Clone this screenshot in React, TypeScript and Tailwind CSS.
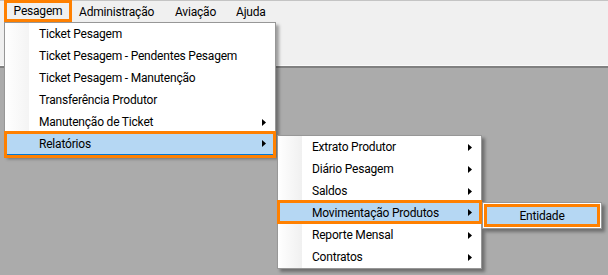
import React from 'react';

interface MenuItem {
  label: string;
  sub?: boolean;
  active?: boolean;
}

const pesagemItems: MenuItem[] = [
  { label: 'Ticket Pesagem' },
  { label: 'Ticket Pesagem - Pendentes Pesagem' },
  { label: 'Ticket Pesagem - Manutenção' },
  { label: 'Transferência Produtor' },
  { label: 'Manutenção de Ticket', sub: true },
  { label: 'Relatórios', sub: true, active: true },
];

const relatoriosItems: MenuItem[] = [
  { label: 'Extrato Produtor', sub: true },
  { label: 'Diário Pesagem', sub: true },
  { label: 'Saldos', sub: true },
  { label: 'Movimentação Produtos', sub: true, active: true },
  { label: 'Reporte Mensal', sub: true },
  { label: 'Contratos', sub: true },
];

function Arrow() {
  return (
    <svg width="4" height="7" viewBox="0 0 4 7" className="shrink-0">
      <polygon points="0,0 4,3.5 0,7" fill="#000" />
    </svg>
  );
}

function MenuRow({ item, last }: { item: MenuItem; last?: boolean }) {
  return (
    <div
      className={`relative flex h-[22px] items-center justify-between pl-[34px] pr-[9px] ${
        item.active ? 'bg-[#b5d7f3] border-b border-[#0078d7]' : ''
      }`}
    >
      <span className="whitespace-nowrap">{item.label}</span>
      {item.sub && <Arrow />}
      {item.active && (
        <div
          className={`absolute -left-[1px] -top-[2px] -right-[1px] border-[3px] border-[#ff8000] ${
            last ? '-bottom-[4px]' : '-bottom-[1px]'
          }`}
        />
      )}
    </div>
  );
}

function App() {
  return (
    <div className="relative w-[608px] h-[275px] overflow-hidden bg-[#ababab] text-[12px] tracking-[-0.2px] text-black font-['Roboto',sans-serif]">
      {/* menu bar + toolbar area */}
      <div className="h-[68px] bg-[#f0f0f0] border-t border-[#c4c4c4]">
        <div className="flex h-[21px] items-center">
          <div className="ml-[4px] flex h-[22px] w-[68px] -mt-[1px] items-center justify-center border-[3px] border-[#ff8000]">
            Pesagem
          </div>
          <div className="pl-[7px] w-[103px]">Administração</div>
          <div className="w-[61px]">Aviação</div>
          <div>Ajuda</div>
        </div>
      </div>
      <div className="h-px bg-[#fafafa] -mt-[3px]" />
      <div className="h-[2px] bg-[#808080]" />

      {/* Pesagem dropdown */}
      <div className="absolute left-[4px] top-[22px] w-[272px] border border-[#979797] bg-white shadow-[3px_3px_3px_rgba(0,0,0,0.35)]">
        <div className="absolute left-0 top-0 bottom-0 w-[24px] bg-gradient-to-r from-white to-[#f4f4f4]" />
        <div className="relative">
          {pesagemItems.map((item, i) => (
            <MenuRow key={item.label} item={item} last={i === pesagemItems.length - 1} />
          ))}
        </div>
      </div>

      {/* Relatórios submenu */}
      <div className="absolute left-[277px] top-[135px] w-[205px] border border-[#979797] bg-white shadow-[3px_3px_3px_rgba(0,0,0,0.35)]">
        <div className="absolute left-0 top-0 bottom-0 w-[24px] bg-gradient-to-r from-white to-[#f0f0f0]" />
        <div className="relative">
          {relatoriosItems.map(item => (
            <MenuRow key={item.label} item={item} />
          ))}
        </div>
      </div>

      {/* Movimentação Produtos submenu */}
      <div className="absolute left-[482px] top-[202px] w-[120px] border border-[#979797] bg-white p-px shadow-[3px_3px_3px_rgba(0,0,0,0.35)]">
        <div className="flex h-[23px] items-center justify-center border-[3px] border-[#ff8000] bg-[#b5d7f3]">
          Entidade
        </div>
      </div>
    </div>
  );
}

export default App;
